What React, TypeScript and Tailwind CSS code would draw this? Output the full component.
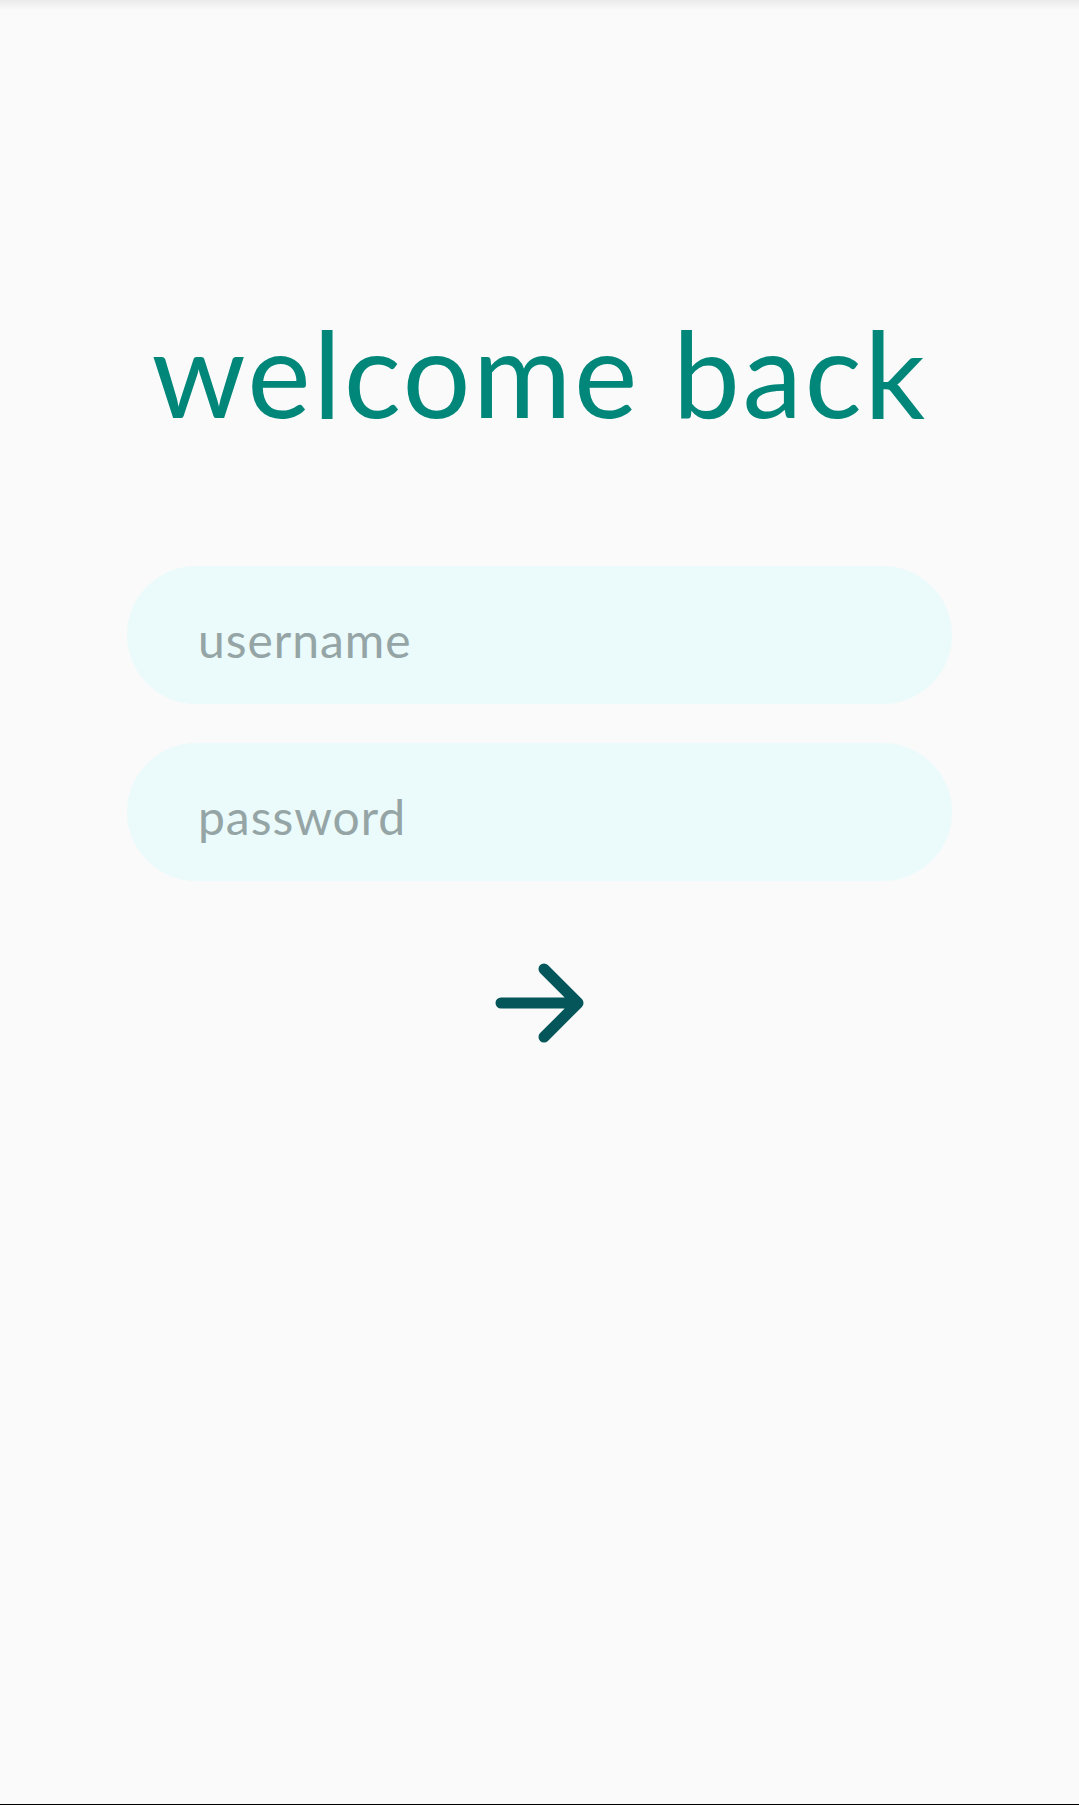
import React from 'react';

const ArrowForward = () => (
  <svg width="100" height="90" viewBox="0 0 100 90" fill="none" aria-hidden="true">
    <path
      d="M11 45H88M54 11L88 45L54 79"
      stroke="#04565a"
      strokeWidth="11"
      strokeLinecap="round"
      strokeLinejoin="round"
    />
  </svg>
);

export default function App() {
  return (
    <div className="h-[1805px] flex flex-col bg-[#fafafa] font-['Lato','Noto_Sans',sans-serif]">
      {/* app bar shadow */}
      <div className="h-[10px] bg-gradient-to-b from-[#ebebeb] to-[#fafafa]" />

      <h1 className="mt-[302px] text-center text-[120px] leading-none tracking-[0.02em] font-normal text-[#00877a]">
        welcome back
      </h1>

      {/* Form */}
      <form className="mt-[134px] mx-auto w-[825px] flex flex-col gap-[39px]">
        <input
          type="text"
          placeholder="username"
          className="h-[138px] rounded-full bg-[#ebfafa] pl-[71px] pr-8 pt-[8px] text-[48px] tracking-[0.02em] text-[#37474f] placeholder:text-[#95a5a6] outline-none"
        />
        <input
          type="password"
          placeholder="password"
          className="h-[138px] rounded-full bg-[#ebfafa] pl-[71px] pr-8 pt-[8px] text-[48px] tracking-[0.02em] text-[#37474f] placeholder:text-[#95a5a6] outline-none"
        />
      </form>

      <button type="button" className="mt-[77px] mx-auto flex items-center justify-center" aria-label="sign in">
        <ArrowForward />
      </button>

      <div className="mt-auto h-px bg-black" />
    </div>
  );
}
